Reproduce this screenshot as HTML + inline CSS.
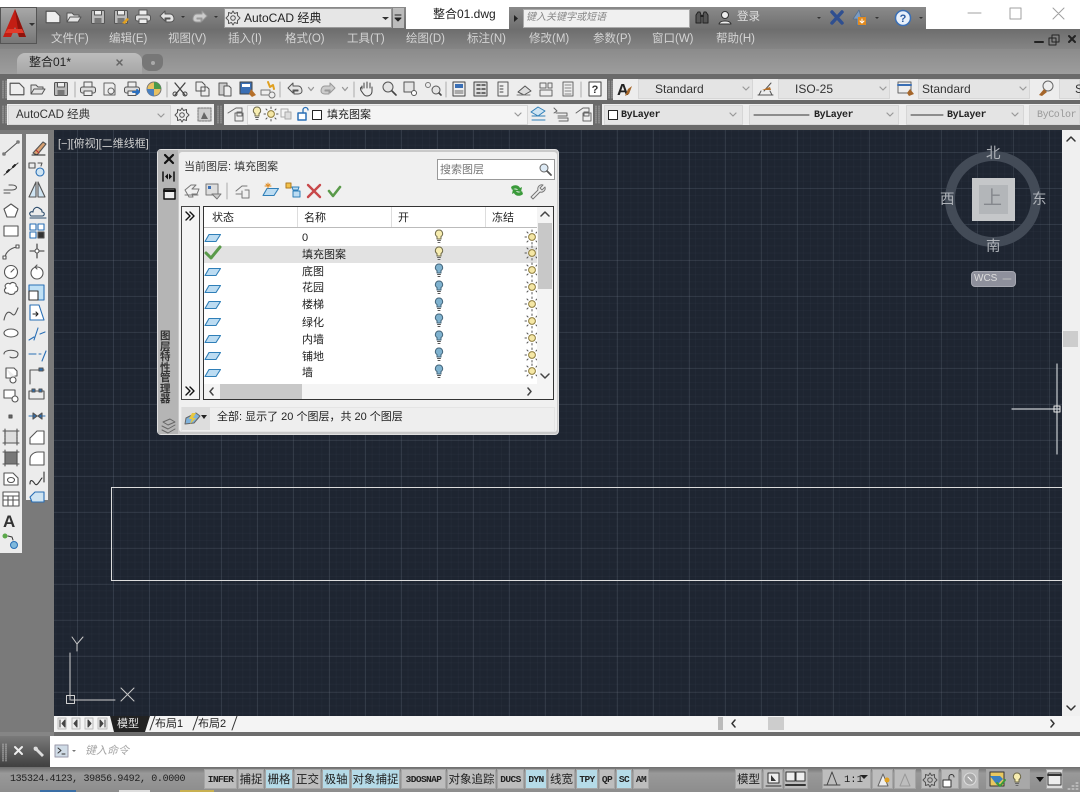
<!DOCTYPE html>
<html><head><meta charset="utf-8"><style>
html,body{margin:0;padding:0;background:#fff}
body{position:relative;width:1080px;height:792px;overflow:hidden;font-family:"Liberation Sans","Noto Sans CJK SC",sans-serif;font-size:11px;color:#222}
div{position:absolute;box-sizing:border-box}
.t{white-space:nowrap;line-height:14px}
.m{top:32px;color:#d4d4d4;font-size:11.5px}
.c{background:#e9e9e9;border:1px solid #d6d6d6;height:20px}
.mono{font-family:"Liberation Mono","Noto Sans CJK SC",monospace;font-weight:bold;font-size:10px;letter-spacing:-.4px}
.b{top:769px;height:20px;background:#bdbdbd;text-align:center;line-height:20px;color:#222;font-size:11.5px;white-space:nowrap;border:1px solid #a5a5a5;overflow:hidden}
.b.on{background:#b5dbe8}
.b.s{font-family:"Liberation Mono","Noto Sans CJK SC",monospace;font-weight:bold;font-size:9.5px;letter-spacing:-.6px}
svg{position:absolute;left:0;top:0}
.lr{left:302px;font-size:11px;color:#222}
</style></head><body>
<!-- top bars -->
<div style="left:37px;top:7px;width:369px;height:22px;background:linear-gradient(#8a8a8a,#6f6f6f)"></div>
<div style="left:509px;top:7px;width:417px;height:22px;background:linear-gradient(#8a8a8a,#6f6f6f)"></div>
<div style="left:0;top:29px;width:1080px;height:20px;background:linear-gradient(#6d6d6d,#858585)"></div>
<div style="left:0;top:49px;width:1080px;height:25px;background:linear-gradient(#8b8b8b,#9d9d9d)"></div>
<div style="left:0;top:74px;width:1080px;height:56px;background:#6a6a6a"></div>
<div style="left:0;top:7px;width:37px;height:37px;background:linear-gradient(#a8a8a8,#777);border:1px solid #555"></div>
<!-- combos top -->
<div style="left:224px;top:8px;width:168px;height:20px;background:#e6e6e6;border:1px solid #999"></div>
<div class="t" style="left:244px;top:11px;font-size:12px">AutoCAD 经典</div>
<div style="left:393px;top:8px;width:11px;height:20px;background:#bbb"></div>
<div class="t" style="left:433px;top:7px;font-size:12px">整合01.dwg</div>
<div style="left:523px;top:9px;width:167px;height:19px;background:#f0f0f0;border:1px solid #aaa"></div>
<div class="t" style="left:526px;top:11px;font-size:10px;font-style:italic;color:#888">键入关键字或短语</div>
<div class="t" style="left:737px;top:10px;color:#ddd;font-size:11.5px">登录</div>
<!-- menu -->
<div class="t m" style="left:51px">文件(F)</div><div class="t m" style="left:109px">编辑(E)</div><div class="t m" style="left:168px">视图(V)</div><div class="t m" style="left:228px">插入(I)</div><div class="t m" style="left:285px">格式(O)</div><div class="t m" style="left:347px">工具(T)</div><div class="t m" style="left:406px">绘图(D)</div><div class="t m" style="left:467px">标注(N)</div><div class="t m" style="left:529px">修改(M)</div><div class="t m" style="left:593px">参数(P)</div><div class="t m" style="left:652px">窗口(W)</div><div class="t m" style="left:716px">帮助(H)</div>
<!-- tab -->
<div style="left:17px;top:53px;width:125px;height:21px;background:linear-gradient(#bdbdbd,#a6a6a6);border-radius:8px 8px 0 0"></div>
<div class="t" style="left:29px;top:55px;font-size:12px">整合01*</div>
<div style="left:142px;top:54px;width:21px;height:17px;background:#777;border-radius:5px 5px 8px 8px"></div>
<!-- toolbars -->
<div style="left:7px;top:79px;width:600px;height:21px;background:#ededed"></div>
<div style="left:613px;top:79px;width:467px;height:21px;background:#ededed"></div>
<div style="left:7px;top:104px;width:207px;height:21px;background:#ededed"></div>
<div style="left:224px;top:104px;width:369px;height:21px;background:#ededed"></div>
<div style="left:602px;top:104px;width:478px;height:21px;background:#ededed"></div>
<div class="c" style="left:638px;top:79px;width:115px;background:#e4e4e4"></div><div class="t" style="left:655px;top:82px;font-size:12px;color:#333">Standard</div>
<div class="c" style="left:778px;top:79px;width:112px;background:#e4e4e4"></div><div class="t" style="left:795px;top:82px;font-size:12px;color:#333">ISO-25</div>
<div class="c" style="left:918px;top:79px;width:112px;background:#e4e4e4"></div><div class="t" style="left:922px;top:82px;font-size:12px;color:#333">Standard</div>
<div class="c" style="left:1059px;top:79px;width:21px;background:#e4e4e4"></div><div class="t" style="left:1075px;top:82px;font-size:12px;color:#333">S</div>
<div class="c" style="left:8px;top:105px;width:163px;height:20px;background:#e4e4e4"></div><div class="t" style="left:16px;top:108px;font-size:11.5px;color:#333">AutoCAD 经典</div>
<div class="c" style="left:247px;top:105px;width:281px;height:20px;background:#f4f4f4"></div><div class="t" style="left:327px;top:108px;font-size:11px">填充图案</div>
<div class="c" style="left:604px;top:105px;width:139px;height:20px;background:#e4e4e4"></div><div class="t mono" style="left:621px;top:109px">ByLayer</div>
<div class="c" style="left:749px;top:105px;width:150px;height:20px;background:#e4e4e4"></div><div class="t mono" style="left:814px;top:109px">ByLayer</div>
<div class="c" style="left:906px;top:105px;width:118px;height:20px;background:#e4e4e4"></div><div class="t mono" style="left:947px;top:109px">ByLayer</div>
<div class="c" style="left:1029px;top:105px;width:51px;height:20px;background:#dedede"></div><div class="t mono" style="left:1037px;top:109px;color:#999;font-weight:normal">ByColor</div>
<!-- sides -->
<div style="left:0;top:130px;width:54px;height:606px;background:#7a7a7a"></div>
<div style="left:0;top:134px;width:22px;height:419px;background:#ececec"></div>
<div style="left:26px;top:134px;width:22px;height:366px;background:#ececec"></div>
<!-- canvas -->
<div style="left:54px;top:130px;width:1008px;height:586px;background-color:#1e2531;background-image:linear-gradient(90deg,rgba(120,130,145,.2) 1px,transparent 1px),linear-gradient(rgba(120,130,145,.18) 1px,transparent 1px),linear-gradient(90deg,rgba(90,100,115,.07) 1px,transparent 1px),linear-gradient(rgba(90,100,115,.07) 1px,transparent 1px);background-size:36px 36px,36px 36px,7.2px 7.2px,7.2px 7.2px;background-position:23px 22px,23px 22px,1.4px 0,0 .4px"></div>
<div class="t" style="left:58px;top:137px;color:#cfcfcf;font-size:11px">[−][俯视][二维线框]</div>
<div style="left:111px;top:487px;width:960px;height:94px;border:1px solid #dcdcdc"></div>
<!-- compass -->
<svg width="1080" height="792" viewBox="0 0 1080 792" fill="none"><circle cx="993" cy="199" r="43" stroke="#434b57" stroke-width="10"/></svg>
<div class="t" style="left:986px;top:147px;color:#aeb2b8;font-size:14.500px">北</div>
<div class="t" style="left:986px;top:240px;color:#aeb2b8;font-size:14.500px">南</div>
<div class="t" style="left:940px;top:193px;color:#aeb2b8;font-size:14.500px">西</div>
<div class="t" style="left:1032px;top:193px;color:#aeb2b8;font-size:14.500px">东</div>
<div style="left:972px;top:178px;width:43px;height:43px;background:#c5c7c9"></div>
<div style="left:979px;top:185px;width:29px;height:29px;background:#b3b6b9"></div>
<div class="t" style="left:983px;top:192px;color:#85888d;font-size:19px">上</div>
<div style="left:971px;top:271px;width:45px;height:16px;background:#8e909c;border-radius:4px;border:1px solid #a5a7b0"></div>
<div class="t" style="left:974px;top:272px;color:#dcdcdc;font-size:10px">WCS</div>
<!-- right scroll -->
<div style="left:1062px;top:130px;width:18px;height:586px;background:#f0f0f0"></div>
<div style="left:1063px;top:331px;width:15px;height:16px;background:#cdcdcd"></div>
<!-- layout tabs -->
<div style="left:54px;top:716px;width:1026px;height:16px;background:#f4f4f4"></div>
<div style="left:718px;top:717px;width:5px;height:13px;background:#bbb"></div>
<div style="left:768px;top:717px;width:16px;height:13px;background:#cdcdcd"></div>
<div class="t" style="left:117px;top:717px;color:#e8e8e8;font-size:11px;z-index:3">模型</div>
<div class="t" style="left:155px;top:717px;font-size:11px">布局1</div>
<div class="t" style="left:198px;top:717px;font-size:11px">布局2</div>
<!-- command -->
<div style="left:0;top:732px;width:1080px;height:4px;background:#6d6d6d"></div>
<div style="left:0;top:732px;width:54px;height:4px;background:#858585"></div>
<div style="left:0;top:736px;width:50px;height:32px;background:linear-gradient(#7a7a7a,#3e3e3e)"></div>
<div style="left:50px;top:736px;width:1030px;height:31px;background:#fff"></div>
<div class="t" style="left:85px;top:744px;font-style:italic;color:#a6a6a6;font-size:11px">键入命令</div>
<!-- status -->
<div style="left:0;top:767px;width:1080px;height:25px;background:linear-gradient(#6f6f6f,#999 25%,#8d8d8d)"></div>
<div style="left:40px;top:790px;width:36px;height:2px;background:#3a6ea5"></div><div style="left:119px;top:790px;width:31px;height:2px;background:#ddd"></div><div style="left:180px;top:790px;width:34px;height:2px;background:#c8b050"></div>
<div class="t" style="left:10px;top:773px;font-family:'Liberation Mono',monospace;font-size:10px;letter-spacing:-.35px;color:#222">135324.4123, 39856.9492, 0.0000</div>
<div class="b s" style="left:204px;width:33px">INFER</div><div class="b" style="left:238px;width:26px">捕捉</div><div class="b on" style="left:265px;width:28px">栅格</div><div class="b" style="left:294px;width:27px">正交</div><div class="b on" style="left:322px;width:28px">极轴</div><div class="b on" style="left:351px;width:49px">对象捕捉</div><div class="b s" style="left:401px;width:45px">3DOSNAP</div><div class="b" style="left:447px;width:49px">对象追踪</div><div class="b s" style="left:497px;width:27px">DUCS</div><div class="b on s" style="left:525px;width:22px">DYN</div><div class="b" style="left:548px;width:27px">线宽</div><div class="b on s" style="left:576px;width:22px">TPY</div><div class="b s" style="left:599px;width:16px">QP</div><div class="b on s" style="left:616px;width:16px">SC</div><div class="b s" style="left:633px;width:16px">AM</div>
<div class="b" style="left:735px;width:27px">模型</div><div class="b" style="left:763px;width:20px"></div><div class="b" style="left:784px;width:24px"></div>
<div class="b" style="left:822px;width:49px;text-align:left;padding-left:21px;font-size:10.5px;font-family:'Liberation Mono',monospace">1:1</div>
<div class="b" style="left:872px;width:21px"></div><div class="b" style="left:894px;width:22px"></div>
<div class="b" style="left:921px;width:18px"></div><div class="b" style="left:941px;width:18px"></div><div class="b" style="left:961px;width:18px"></div>
<div class="b" style="left:986px;width:44px;background:#a8a8a8"></div><div class="b" style="left:1046px;width:17px;background:#ddd"></div>

<!-- layer palette -->
<div style="left:157px;top:149px;width:402px;height:286px;background:#c9c9c9;border:1px solid #e0e0e0;border-radius:4px"></div>
<div style="left:158px;top:150px;width:20px;height:284px;background:#b5b5b5"></div>
<div style="left:179px;top:152px;width:378px;height:280px;background:#f0f0f0;border-radius:3px"></div>
<div class="t" style="left:184px;top:160px;font-size:11px;color:#333">当前图层: 填充图案</div>
<div style="left:437px;top:159px;width:118px;height:21px;background:#fff;border:1px solid #999"></div>
<div class="t" style="left:440px;top:163px;font-size:11px;color:#777">搜索图层</div>
<div style="left:181px;top:206px;width:19px;height:194px;background:#f4f4f4;border:1px solid #444"></div>
<div style="left:203px;top:206px;width:351px;height:194px;background:#fff;border:1px solid #333"></div>
<div style="left:204px;top:227px;width:333px;height:1px;background:#bbb"></div>
<div style="left:297px;top:207px;width:1px;height:20px;background:#ddd"></div>
<div style="left:391px;top:207px;width:1px;height:20px;background:#ddd"></div>
<div style="left:485px;top:207px;width:1px;height:20px;background:#ddd"></div>
<div class="t" style="left:212px;top:211px">状态</div><div class="t" style="left:304px;top:211px">名称</div><div class="t" style="left:398px;top:211px">开</div><div class="t" style="left:492px;top:211px">冻结</div>
<div style="left:204px;top:246px;width:333px;height:17px;background:#e2e2e2"></div>
<div class="t lr" style="top:231px">0</div><div class="t lr" style="top:248px">填充图案</div><div class="t lr" style="top:265px">底图</div><div class="t lr" style="top:281px">花园</div><div class="t lr" style="top:298px">楼梯</div><div class="t lr" style="top:316px">绿化</div><div class="t lr" style="top:333px">内墙</div><div class="t lr" style="top:350px">铺地</div><div class="t lr" style="top:366px">墙</div>
<div style="left:204px;top:384px;width:349px;height:15px;background:#f4f4f4"></div>
<div style="left:220px;top:384px;width:82px;height:15px;background:#c8c8c8"></div>
<div style="left:537px;top:207px;width:16px;height:177px;background:#f4f4f4"></div>
<div style="left:538px;top:223px;width:14px;height:66px;background:#c8c8c8"></div>
<div style="left:181px;top:407px;width:374px;height:25px;background:#eee;border:1px solid #e4e4e4"></div>
<div style="left:182px;top:407px;width:28px;height:23px;background:#ddd"></div>
<div class="t" style="left:217px;top:410px;font-size:11px;color:#222">全部: 显示了 20 个图层，共 20 个图层</div>
<div class="t" style="left:160px;top:331px;width:14px;font-size:10.500px;line-height:10.500px;white-space:normal;color:#333;font-weight:bold">图层特性管理器</div>

<svg width="1080" height="792" viewBox="0 0 1080 792" fill="none" stroke-linecap="round" stroke-linejoin="round">
<defs>
<g id="bulbY"><path d="M0-7a3.6 3.6 0 0 1 2 6.6V2h-4V-.4A3.6 3.6 0 0 1 0-7z" fill="#f7edb0" stroke="#6f6a4a"/><path d="M-1.5 3.5h3M-1 5.5h2" stroke="#666"/></g>
<g id="bulbB"><path d="M0-7a3.6 3.6 0 0 1 2 6.6V2h-4V-.4A3.6 3.6 0 0 1 0-7z" fill="#7fb2cf" stroke="#44657a"/><path d="M-1.5 3.5h3M-1 5.5h2" stroke="#555"/></g>
<g id="sun"><circle r="3.4" fill="#f5e7a5" stroke="#8d7b3c"/><path d="M0-7v1.5M0 5.5V7M-7 0h1.5M5.5 0H7M-5-5l1 1M4 4l1 1M-5 5l1-1M4-4l1-1" stroke="#555"/></g>
<path id="lay" d="M-4-3.5H7.5L3 3.5H-8z" fill="#bcdcf2" stroke="#2f7fb8" stroke-width="1.1"/>
<path id="gear" d="M0-7l1.5 2.5L4.500-5.500 4.500-2.500 7 0 4.500 2.500 4.500 5.500 1.500 4.500 0 7-1.500 4.500-4.500 5.500-4.500 2.500-7 0-4.500-2.500-4.500-5.500-1.500-4.500z M2.300 0a2.300 2.300 0 1 1-4.600 0 2.300 2.300 0 1 1 4.600 0z" stroke="#555" fill="none"/>
<g id="new" transform="scale(1.15)"><path d="M-6-5H2L6-1V5H-6z" fill="#eee" stroke="#555"/></g>
<g id="open"><path d="M-7 5V-4H-2L0-2H5V0M-7 5L-4 0H7L4 5z" fill="#e4e4e4" stroke="#555"/></g>
<g id="save"><rect x="-6.500" y="-6.500" width="13" height="13" rx="1" fill="#bbb" stroke="#555"/><rect x="-3.500" y="-6.500" width="7" height="4.500" fill="#eee" stroke="#555"/><rect x="-3.500" y="1" width="7" height="5.500" fill="#777"/></g>
<g id="print"><rect x="-4" y="-7" width="8" height="5" fill="#eee" stroke="#555"/><rect x="-7.500" y="-2" width="15" height="6" rx="2" fill="#ddd" stroke="#555"/><rect x="-4" y="2" width="8" height="4.500" fill="#eee" stroke="#555"/></g>
<g id="undo"><path d="M-7-1L-2-6V-3H3C6-3 7 0 7 2S5 5 3 5H-1V2H3V1H-2V4z" fill="#e4e4e4" stroke="#555"/></g>
<g id="redo"><path d="M7-1L2-6V-3H-3C-6-3-7 0-7 2S-5 5-3 5H1V2H-3V1H2V4z" fill="#ccc" stroke="#999"/></g>
<path id="dn" d="M-2.500-1.500L0 1.500 2.500-1.500" stroke="#999" stroke-width="1.300"/>
<clipPath id="cs"><rect x="520" y="229" width="17" height="155"/></clipPath>
</defs>

<!-- app logo -->
<path d="M15 9L26 37H19L15 27 11 37H3z" fill="#c31e14"/><path d="M15 9L19 37H26z" fill="#8f130c"/><path d="M8 29H22L24 33H5z" fill="#e23b2b"/>
<path d="M29 23h6l-3 3z" fill="#333"/>
<!-- QAT -->
<use href="#new" x="0" y="0" transform="translate(53 17)"/><use href="#open" x="74" y="17"/><use href="#save" x="98" y="17"/><use href="#save" x="121" y="17"/><path d="M122 23l5-5 2 1-4 5z" fill="#e0a020"/><use href="#print" x="143" y="17"/><use href="#undo" x="167" y="17"/><use href="#redo" x="200" y="17"/>
<path d="M181 16h4l-2 2zM214 16h4l-2 2z" fill="#333"/>
<use href="#gear" x="233" y="18"/>
<path d="M382 17h7l-3.500 3z" fill="#333"/><path d="M395 15h6M395 18h6l-3 3z" stroke="#222" fill="#222"/>
<path d="M514 15l4 3.500-4 3.500z" fill="#222"/>
<!-- binoc, user, etc -->
<path d="M696 15l2-3h2l1 3v8h-5zM703 15l1-3h2l2 3v8h-5z" fill="#555" stroke="#222"/><path d="M701 16h2" stroke="#222" stroke-width="2"/>
<circle cx="725" cy="15" r="3.500" fill="#eee" stroke="#333"/><path d="M719 24c1-4 11-4 12 0z" fill="#eee" stroke="#333"/>
<path d="M817 17h4l-2 2zM875 17h4l-2 2zM919 17h4l-2 2z" fill="#333"/>
<path d="M832 12l10 11M842 12l-10 11" stroke="#2f4f90" stroke-width="3.500"/>
<path d="M859 10l-6 9h4v6h8v-8h-4z" fill="#7d9cc0" stroke="#56708f" stroke-width=".8"/><rect x="858" y="17" width="8" height="8" fill="#e08a20"/><path d="M862 19v3M860 21l2 2 2-2" stroke="#fff"/>
<circle cx="903" cy="18" r="7.500" fill="#e8f0fa" stroke="#3a6fb5" stroke-width="1.500"/><text x="903" y="22" font-size="11" font-weight="bold" text-anchor="middle" fill="#2a5aa0" font-family="Liberation Sans">?</text>
<!-- window controls -->
<path d="M968 13h13M1010 8h11v11h-11zM1053 8l11 11M1064 8l-11 11" stroke="#a0a0a0"/>
<!-- menu bar right -->
<path d="M1035 42h8" stroke="#222" stroke-width="2"/><path d="M1052 35h7v7h-7zM1049 38h7v7h-7z" fill="#808080" stroke="#222"/><path d="M1069 36l6 6M1075 36l-6 6" stroke="#222" stroke-width="2"/>
<!-- tab x + -->
<path d="M117 60l5 5M122 60l-5 5" stroke="#666" stroke-width="1.500"/><circle cx="153" cy="63" r="2" fill="#aaa"/>
<!-- toolbar handles -->
<path d="M3 81v17M6 81v17M3 106v17M6 106v17M218 106v17M221 106v17M596 106v17M599 106v17M609 81v17M612 81v17" stroke="#aaa" stroke-dasharray="1 1"/>
<!-- toolbar row1 -->
<g transform="translate(0 -2)">
<use href="#new" transform="translate(17 91)"/><use href="#open" x="38" y="91"/><use href="#save" x="61" y="91"/>
<path d="M75 84v15M167 84v15M280 84v15M354 84v15M446 84v15M581 84v15" stroke="#aaa"/>
<use href="#print" x="88" y="91"/>
<path d="M104 85h9l2 2v10h-11z" fill="#eee" stroke="#666"/><circle cx="111" cy="93" r="3" stroke="#666"/>
<use href="#print" x="132" y="91"/><path d="M133 94h6l-2-2M139 94l-2 2" stroke="#2a6fc0" stroke-width="2"/>
<circle cx="154" cy="91" r="7" fill="#e8c060" stroke="#777"/><path d="M154 84a7 7 0 0 1 7 7h-7z" fill="#4a9a4a"/><path d="M147 91a7 7 0 0 0 7 7v-7z" fill="#4a80c0"/>
<path d="M175 85l10 12M185 85l-10 12" stroke="#444" stroke-width="1.300"/><circle cx="175" cy="96" r="2" stroke="#444"/><circle cx="185" cy="96" r="2" stroke="#444"/>
<path d="M196 84h6l3 3v6h-9zM201 89h6l2 2v7h-8z" fill="#eee" stroke="#555"/>
<path d="M219 85h8v12h-8z" fill="#ccc" stroke="#555"/><path d="M224 88h5l2 2v8h-7z" fill="#eee" stroke="#555"/>
<rect x="240" y="84" width="12" height="12" fill="#3a6fb5" stroke="#444"/><path d="M251 91l5 6-4 2-3-3z" fill="#b5702a"/><rect x="242" y="86" width="8" height="3" fill="#fff"/>
<path d="M261 92h9v5h-9z" stroke="#777" fill="#eee"/><circle cx="272" cy="97" r="3" stroke="#777" fill="#eee"/><path d="M268 84l2 5 3-2 1 4" stroke="#e0a020" stroke-width="2"/>
<use href="#undo" x="295" y="91"/><use href="#dn" x="311" y="91"/><use href="#redo" x="328" y="91"/><use href="#dn" x="345" y="91"/>
<path d="M362 91v-3M364 90v-5M367 90v-6M370 90v-5M372 91v-2M362 89c-2 0-2 3 0 5 2 3 3 4 5 4s5-1 5-5v-4" stroke="#444" fill="#eee"/>
<circle cx="388" cy="89" r="5" stroke="#555" fill="#e4e4e4"/><path d="M392 93l4 4" stroke="#444" stroke-width="1.600"/>
<rect x="404" y="84" width="10" height="10" stroke="#555" fill="#e4e4e4"/><circle cx="414" cy="95" r="2.500" stroke="#555" fill="#fff"/>
<circle cx="428" cy="87" r="2.500" stroke="#777"/><circle cx="436" cy="92" r="4" stroke="#555" fill="#e4e4e4"/><path d="M439 95l2 2" stroke="#444" stroke-width="1.600"/>
<rect x="453" y="84" width="12" height="14" fill="#eee" stroke="#444"/><rect x="455" y="86" width="8" height="4" fill="#3a6fb5"/><path d="M455 93h8M455 95h8" stroke="#666"/>
<rect x="474" y="84" width="13" height="14" fill="#ddd" stroke="#444"/><path d="M477 87h3M482 87h3M477 91h3M482 91h3M477 95h3M482 95h3" stroke="#444" stroke-width="1.500"/>
<rect x="498" y="84" width="10" height="14" fill="#eee" stroke="#555"/><path d="M500 88h3M500 91h3M500 94h3" stroke="#444"/>
<path d="M518 94l7-6 6 5-7 4z" fill="#ddd" stroke="#555"/><path d="M517 97h13" stroke="#777"/>
<rect x="540" y="85" width="6" height="5" stroke="#666"/><rect x="540" y="92" width="12" height="6" stroke="#666"/><rect x="548" y="85" width="4" height="5" stroke="#666"/>
<rect x="563" y="84" width="10" height="14" fill="#eee" stroke="#666"/><path d="M565 87h6M565 90h6M565 93h6M565 96h6" stroke="#888"/>
<rect x="589" y="84" width="12" height="14" fill="#fff" stroke="#444"/><text x="595" y="95" font-size="11" font-weight="bold" text-anchor="middle" fill="#333" font-family="Liberation Sans">?</text>
<text x="617" y="97" font-size="16" font-weight="bold" fill="#222" font-family="Liberation Sans">A</text><path d="M628 91l4-3-3 8-4 2z" fill="#a5662a"/>
<path d="M758 97h15M761 93l-2 4M770 93l2 4M764 93l7-8" stroke="#555"/><path d="M762 92l8-3 1 3z" fill="#b5702a"/>
<rect x="898" y="84" width="13" height="11" fill="#eee" stroke="#666"/><path d="M898 87h13" stroke="#3a6fb5" stroke-width="2"/><path d="M910 91l4 5-5 2-2-3z" fill="#a5662a"/>
<circle cx="1048" cy="88" r="5" stroke="#666"/><path d="M1039 97l5-6 3 3-5 4z" fill="#a5662a"/>
</g>
<path d="M749 87l-3 3-3-3M886 87l-3 3-3-3M1026 87l-3 3-3-3M521 113l-3 3-3-3M164 114l-3 3-3-3M736 113l-3 3-3-3M893 113l-3 3-3-3M1018 113l-3 3-3-3" stroke="#999" stroke-width="1.200"/>
<!-- row2 -->
<use href="#gear" x="182" y="115"/>
<rect x="198" y="108" width="13" height="13" stroke="#777" fill="#ccc" stroke-dasharray="2 1"/><path d="M201 119l3-7 4 7z" fill="#666"/>
<path d="M228 113l8-5h6v4h-5v4h5v-3M235 113v8h8v-8z" stroke="#666"/>
<use href="#bulbY" x="257" y="114"/><use href="#sun" x="271" y="114"/>
<rect x="281" y="109" width="7" height="8" stroke="#aaa"/><rect x="285" y="112" width="6" height="7" stroke="#aaa" fill="#ddd"/>
<rect x="298" y="113" width="8" height="7" fill="#fff" stroke="#2a6fb5" stroke-width="1.500"/><path d="M303 113v-3a2.500 2.500 0 0 1 5 0" stroke="#2a6fb5" stroke-width="1.300"/>
<rect x="312.500" y="110.500" width="9" height="9" fill="#fff" stroke="#222"/>
<path d="M531 112l7-5 7 4-7 5zM532 116h13M532 120h13" stroke="#2f7fb8" fill="#cfe4f2"/>
<path d="M554 108l3 3-3 2M556 113h11v3h-9M558 118h10v3h-9" stroke="#666"/>
<path d="M576 113l7-5h6v4h-5v4h5v-3M583 113v8h8v-8z" stroke="#666"/>
<rect x="608.500" y="110.500" width="9" height="9" fill="#fff" stroke="#222"/>
<path d="M754 115h55M911 115h32" stroke="#333"/>
<!-- left tool col1 -->
<g stroke="#555" stroke-width="1.100">
<path d="M4 154L18 142"/><rect x="3" y="153" width="2" height="2" fill="#fff"/><rect x="17" y="141" width="2" height="2" fill="#fff"/>
<path d="M4 175L18 163" /><path d="M7 172l2-2M13 167l2-2" stroke="#222" stroke-width="2"/>
<path d="M4 190h8c6 0 6-5 0-5H9M4 193h6"/>
<path d="M11 204l7 5-3 8H7l-3-8z" fill="#fff"/>
<rect x="4" y="226" width="14" height="10" fill="#fff"/>
<path d="M5 258c0-5 5-10 12-11" /><rect x="3" y="256" width="3" height="3" fill="#fff"/><rect x="16" y="245" width="3" height="3" fill="#fff"/>
<circle cx="11" cy="272" r="6.500" fill="#fff"/><path d="M11 272l3-3"/>
<path d="M6 288c-3-3 2-6 4-4 2-3 7-1 6 2 3 1 2 6-1 6 0 3-6 3-7 1-3 1-5-3-2-5z" fill="#fff"/>
<path d="M4 320c2-9 5-9 8-6s4-2 6-6"/>
<ellipse cx="11" cy="333" rx="7" ry="4" fill="#fff"/>
<path d="M4 354c0-5 14-5 14 0s-7 4-8 3"/>
<path d="M6 368h8l3 3v5h-2M6 368v10h5" fill="#fff"/><circle cx="13" cy="380" r="3" fill="#fff"/>
<rect x="4" y="390" width="11" height="8" fill="#fff"/><circle cx="15" cy="399" r="3" fill="#fff"/>
<rect x="9" y="415" width="3" height="3" fill="#666"/>
<rect x="5" y="431" width="12" height="12" fill="#ddd" stroke-dasharray="2 1"/><path d="M3 431h16M3 443h16M5 429v16M17 429v16" />
<rect x="5" y="452" width="12" height="12" fill="#777"/><path d="M3 452h16M3 464h16M5 450v16M17 450v16"/>
<path d="M4 473h9l5 5v7H4z" fill="#fff"/><ellipse cx="11" cy="480" rx="3.500" ry="2.500"/>
<rect x="3" y="492" width="16" height="14" fill="#fff"/><path d="M3 496h16M3 500h16M8 496v10M13 496v10"/>
</g>
<text x="3" y="527" font-size="17" font-family="Liberation Sans" font-weight="bold" fill="#333">A</text>
<circle cx="5" cy="536" r="2.500" fill="#5aa84a"/><path d="M8 536l4 1 1 3" stroke="#333"/><circle cx="14" cy="545" r="3.500" fill="#7fb8dc" stroke="#2a6fb5"/>
<!-- left tool col2 -->
<g stroke="#555" stroke-width="1.100">
<path d="M33 153l10-11 3 2-9 11z" fill="#d8a070"/><path d="M32 155h13" stroke="#222"/><path d="M36 150l3 3" stroke="#b33"/>
<rect x="29" y="163" width="6" height="5" fill="none"/><circle cx="40" cy="172" r="4" stroke="#2a6fb5" fill="#cfe4f2"/><path d="M38 163h4l-1 3"/>
<path d="M36 182v15l-7 0zM38 182v15l7 0z" fill="#cfe4f2"/>
<path d="M31 216c-3-3 0-5 2-4 0-3 3-6 6-4s3 2 3 4c3 0 3 4 0 4zM30 218h16" fill="none" stroke="#2a4a6a"/>
<rect x="30" y="224" width="6" height="6" stroke="#2a6fb5" fill="#fff"/><rect x="38" y="224" width="6" height="6" stroke="#2a6fb5" fill="#fff"/><rect x="30" y="232" width="6" height="6" stroke="#2a6fb5" fill="#fff"/><rect x="38" y="232" width="6" height="6" stroke="#555" fill="#333"/>
<path d="M37 244v14M30 251h14" stroke="#333"/><circle cx="37" cy="251" r="2" fill="#fff"/>
<circle cx="37" cy="273" r="6" fill="#fff"/><path d="M37 265l-2 2 2 2"/>
<rect x="29" y="285" width="15" height="15" stroke="#2a6fb5" fill="#bfe0f5"/><rect x="29" y="291" width="9" height="9" fill="#fff" stroke="#333"/>
<path d="M30 305h9l5 15H30z" fill="#fff" stroke="#2a6fb5"/><path d="M33 314h5l-2-2M38 314l-2 2" stroke="#222"/>
<path d="M29 340l5-3M40 334l5-2M38 328l-4 12" stroke="#2a6fb5"/>
<path d="M29 354h7M39 354h2M42 361l4-10" stroke="#2a6fb5"/>
<path d="M30 384v-14h14" /><rect x="39" y="368" width="4" height="3" fill="#2a6fb5"/>
<path d="M29 399V391h15v8zM33 391v-2M41 391v-2" fill="none"/><rect x="32" y="389" width="3" height="3" fill="#2a6fb5"/><rect x="39" y="389" width="3" height="3" fill="#2a6fb5"/>
<path d="M29 416h16" stroke="#2a6fb5"/><path d="M33 413l4 3-4 3zM42 413l-4 3 4 3z" fill="#2a6fb5"/>
<path d="M30 444v-6l7-7h7v13z" fill="#fff"/><path d="M30 465v-6c0-4 4-7 8-7h6v13z" fill="#fff"/>
<path d="M30 484c0-6 3-3 5 0s5-4 7-6M44 472v10" stroke="#333"/>
<path d="M30 507l5-5h9v10H32z" transform="translate(0 -10)" stroke="#2a6fb5" fill="#cfe4f2"/>
</g>
<path d="M1003 279h8" stroke="#bbb"/>
<!-- crosshair -->
<path d="M1057 364v90M1012 409h48" stroke="#c8ccd0" stroke-width="1.200"/><rect x="1054" y="406" width="6" height="6" stroke="#e8e8e8"/>
<!-- ucs -->
<path d="M70 653v47M71 700h44" stroke="#d0d0d0"/><rect x="66.500" y="695.500" width="8" height="8" stroke="#d0d0d0"/>
<path d="M72 637l5 7 6-7M77 644v7M121 688l13 13M134 688l-13 13" stroke="#c8c8c8"/>
<!-- right scroll arrows -->
<path d="M1067 141l4-4 4 4" stroke="#333" stroke-width="1.500"/><path d="M1067 706l4 4 4-4" stroke="#333" stroke-width="1.500"/>
<!-- layout bar -->
<path d="M58 718h8v11h-8zM72 718h8v11h-8zM85 718h8v11h-8zM98 718h9v11h-9z" stroke="#bbb" fill="#eee"/>
<path d="M60 720v7M65 720l-3 3.500 3 3.500zM77 720l-3 3.500 3 3.500zM88 720l3 3.500-3 3.500zM100 720l3 3.500-3 3.500zM105 720v7" stroke="#444" fill="#444"/>
<path d="M110 716h40l-5 16h-31z" fill="#222"/>
<path d="M150 730l5-14M193 730l5-14M232 730l5-14" stroke="#333"/>
<path d="M735 720l-3 3.500 3 3.500M1051 720l3 3.500-3 3.500" stroke="#333" stroke-width="1.500"/>
<!-- command -->
<path d="M3 744v17M6 744v17" stroke="#bbb" stroke-dasharray="1 1"/>
<path d="M15 747l7 7M22 747l-7 7" stroke="#eee" stroke-width="2"/>
<path d="M34 747c2-1 4 0 4 2l6 6-2 2-6-6c-2 0-3-2-2-4z" fill="#ddd"/>
<rect x="55" y="745" width="13" height="12" fill="#cfdbe6" stroke="#99a"/><path d="M58 748l3 2.500-3 2.500M62 754h3" stroke="#333"/><path d="M72 750h4l-2 2z" fill="#777"/>
<!-- status icons -->
<g transform="translate(0 -1)">
<rect x="768" y="774" width="11" height="10" fill="#eee" stroke="#333"/><path d="M771 782v-6l5 6z" fill="#333"/><path d="M766 787h15" stroke="#333"/>
<rect x="786" y="773" width="9" height="9" fill="#eee" stroke="#333"/><rect x="796" y="773" width="9" height="9" fill="#eee" stroke="#333"/><path d="M786 786h19" stroke="#333" stroke-width="2"/>
<path d="M832 773l-5 13M832 773l5 13M824 786h16" stroke="#444" fill="#eee"/><path d="M860 776h8l-4 4z" fill="#222"/>
<path d="M883 775l-5 12h10z" fill="#eee" stroke="#666"/><circle cx="887" cy="781" r="2.500" fill="#e0a020"/>
<path d="M905 775l-5 12h10z" fill="none" stroke="#999"/>
<use href="#gear" x="930" y="781"/>
<rect x="943" y="781" width="8" height="7" fill="#fff" stroke="#333"/><path d="M949 781v-3a2.500 2.500 0 0 1 5 0" stroke="#333"/>
<circle cx="970" cy="780" r="6" fill="#aaa" stroke="#ddd"/><path d="M968 778l4 4" stroke="#fff"/>
<rect x="990" y="773" width="14" height="14" fill="#e8c860" stroke="#333"/><path d="M990 777h10l3 3-6 6" fill="#3a80c0"/><path d="M997 784l3 3 5-6" stroke="#3a9a3a" stroke-width="2"/>
<use href="#bulbY" x="1017" y="781"/>
<path d="M1036 778h8l-4 5z" fill="#111"/>
<rect x="1048" y="774" width="13" height="12" fill="#eee" stroke="#333"/><path d="M1048 776h13" stroke="#333" stroke-width="2"/>
</g>
<path d="M1068 789h2M1072 786h2M1076 783h2M1072 789h2M1076 786h2M1076 789h2" stroke="#ddd"/>
<!-- palette icons -->
<path d="M165 155l8 8M173 155l-8 8" stroke="#111" stroke-width="2.200"/>
<path d="M163 172v9M174 172v9" stroke="#111" stroke-width="1.500"/><path d="M165 176.500l3-3v6zM172 176.500l-3-3v6z" fill="#111"/>
<rect x="164" y="189" width="11" height="10" fill="#eee" stroke="#111" stroke-width="1.500"/><path d="M164 191h11" stroke="#111" stroke-width="2"/>
<path d="M186 212l4 4-4 4M190 212l4 4-4 4M186 387l4 4-4 4M190 387l4 4-4 4" stroke="#111" stroke-width="1.400"/>
<g stroke="#777" fill="none">
<path d="M185 190l6-5h5l-4 4h7l-2 5h-5l1 3h-4zM185 195h13"/>
<rect x="206" y="184" width="12" height="11" fill="#ddd"/><rect x="208" y="186" width="3" height="3" fill="#3a6fb5" stroke="none"/><path d="M212 194h9l-4 5z" fill="#ccc"/>
<path d="M227 183v16" stroke="#aaa"/>
<path d="M236 191l6-5h5M242 191v7h7v-8h-4M236 194h5"/>
</g>
<use href="#lay" x="271" y="192"/><path d="M266 184l2 2M270 184l-2 2M268 183v5M265 186h6" stroke="#e08a20"/>
<path d="M286 183h5v5h-5z" fill="#f2c14a" stroke="#b07a20"/><path d="M292 187h7l-1 3h-5z M293 191h7v6h-7z" fill="#bcdcf2" stroke="#2f7fb8"/>
<path d="M308 185l12 12M320 185l-12 12" stroke="#c8484a" stroke-width="2.400"/>
<path d="M329 191l4 5 7-9" stroke="#5a9a4a" stroke-width="2.600"/>
<path d="M511 187c3-3 8-2 9 1l2-1-1 5-5-1 2-1c-1-2-4-2-6 0zM523 194c-3 3-8 2-9-1l-2 1 1-5 5 1-2 1c1 2 4 2 6 0z" fill="#3a9a3a"/>
<path d="M531 197l7-7c-1-3 2-6 5-5l-3 3 2 2 3-3c1 3-2 6-5 5l-7 7z" fill="#eee" stroke="#777"/>
<circle cx="544" cy="168" r="4" stroke="#666" fill="#ddeaf5"/><path d="M547 171l4 4" stroke="#555" stroke-width="1.800"/>
<path d="M541 216l4-4 4 4M541 374l4 4 4-4" stroke="#444" stroke-width="1.500"/>
<path d="M213 388l-3 3.500 3 3.500M528 388l3 3.500-3 3.500" stroke="#444" stroke-width="1.500"/>
<use href="#lay" x="213" y="238"/><use href="#lay" x="213" y="272"/><use href="#lay" x="213" y="289"/><use href="#lay" x="213" y="305"/><use href="#lay" x="213" y="322"/><use href="#lay" x="213" y="339"/><use href="#lay" x="213" y="356"/><use href="#lay" x="213" y="373"/>
<path d="M206 253l5 5 9-11" stroke="#5a9a4a" stroke-width="3"/>
<use href="#bulbY" x="439" y="237"/><use href="#bulbY" x="439" y="254"/><use href="#bulbB" x="439" y="271"/><use href="#bulbB" x="439" y="288"/><use href="#bulbB" x="439" y="305"/><use href="#bulbB" x="439" y="321"/><use href="#bulbB" x="439" y="338"/><use href="#bulbB" x="439" y="355"/><use href="#bulbB" x="439" y="372"/>
<g clip-path="url(#cs)"><use href="#sun" x="532" y="237"/><use href="#sun" x="532" y="253"/><use href="#sun" x="532" y="270"/><use href="#sun" x="532" y="287"/><use href="#sun" x="532" y="304"/><use href="#sun" x="532" y="321"/><use href="#sun" x="532" y="338"/><use href="#sun" x="532" y="355"/><use href="#sun" x="532" y="371"/></g>
<path d="M186 418l10-5 4 3-6 7-9 1z" fill="#7fb2dc" stroke="#666"/><path d="M192 413l4 0-3 5h3l-6 6 2-5h-3z" fill="#e8c840"/><path d="M201 415h6l-3 4z" fill="#222"/>
<path d="M163 422l7-3 5 3-7 3zM162 426l6 3 7-4M162 430l6 3 7-4" stroke="#666"/>
</svg>
</body></html>
